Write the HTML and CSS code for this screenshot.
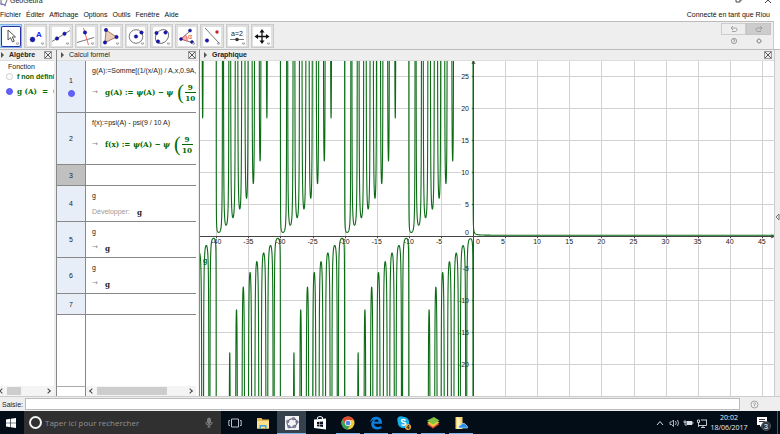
FILE: index.html
```html
<!DOCTYPE html>
<html lang="fr">
<head>
<meta charset="utf-8">
<title>GeoGebra</title>
<link rel="stylesheet" href="styles.css">
</head>
<body>
<header class="titlebar">
  <svg class="title-logo" width="8" height="7" viewBox="0 0 8 7"><path d="M1 0v4l4 1 2-5" fill="none" stroke="#667" /><circle cx="1.5" cy="4" r="1.2" fill="#88c"/><circle cx="5" cy="5" r="1.2" fill="#88c"/></svg>
  <span class="title-text">GeoGebra</span>
  <svg class="title-controls" width="40" height="7" viewBox="0 0 40 7"><path d="M3 0v2h4V0M8 0v1M32 3l3-3 3 3" fill="none" stroke="#444"/></svg>
</header>
<nav class="menubar">
  <a href="#">Fichier</a><a href="#">Éditer</a><a href="#">Affichage</a><a href="#">Options</a><a href="#">Outils</a><a href="#">Fenêtre</a><a href="#">Aide</a>
  <a href="#" class="account">Connecté en tant que Riou</a>
</nav>
<div class="toolbar">
  <div class="tools">
    <button class="tool active" aria-label="Déplacer"><svg viewBox="0 0 18 19"><path d="M6 3v10l2.500-2.300 2 4.300 1.800-.9-2-4.100h3.200z" fill="#fff" stroke="#555"/><path class="more" d="M14 16h3l-1.500 2z"/></svg></button>
    <button class="tool" aria-label="Point"><svg viewBox="0 0 18 19"><circle class="pt" cx="5.500" cy="12.500" r="2.400"/><text x="9" y="10" class="letter">A</text><path class="more" d="M14 16h3l-1.500 2z"/></svg></button>
    <button class="tool" aria-label="Droite"><svg viewBox="0 0 18 19"><path class="ln" d="M0 14.500L18 3.500"/><circle class="pt" cx="5" cy="11.500" r="1.700"/><circle class="pt" cx="12.500" cy="6.700" r="1.700"/><path class="more" d="M14 16h3l-1.500 2z"/></svg></button>
    <button class="tool" aria-label="Perpendiculaire"><svg viewBox="0 0 18 19"><path class="ln" d="M0 15.500L17 10.500"/><path d="M6.500 1l5 17" stroke="#f06a6a"/><circle class="pt" cx="8" cy="5.500" r="1.700"/><path class="more" d="M14 16h3l-1.500 2z"/></svg></button>
    <button class="tool" aria-label="Polygone"><svg viewBox="0 0 18 19"><path d="M4 3l10.500 7L3 15.500z" fill="#eacdbb" stroke="#a67b65"/><circle class="pt" cx="4" cy="3" r="1.700"/><circle class="pt" cx="14.500" cy="10" r="1.700"/><circle class="pt" cx="3" cy="15.500" r="1.700"/><path class="more" d="M14 16h3l-1.500 2z"/></svg></button>
    <button class="tool" aria-label="Cercle"><svg viewBox="0 0 18 19"><circle class="ln" cx="9" cy="9.500" r="6.800"/><circle class="pt" cx="9" cy="9.500" r="1.700"/><circle class="pt" cx="14.500" cy="5.500" r="1.700"/><path class="more" d="M14 16h3l-1.500 2z"/></svg></button>
    <button class="tool" aria-label="Conique"><svg viewBox="0 0 18 19"><ellipse class="ln" cx="9" cy="9.500" rx="7.500" ry="6" transform="rotate(-50 9 9.500)"/><circle class="pt" cx="3.500" cy="6" r="1.700"/><circle class="pt" cx="12.500" cy="5.500" r="1.700"/><circle class="pt" cx="5" cy="14.500" r="1.700"/><path class="more" d="M14 16h3l-1.500 2z"/></svg></button>
    <button class="tool" aria-label="Angle"><svg viewBox="0 0 18 19"><path d="M3 12l9-8M3 12l11 3.500" class="ln"/><path d="M3 12l4.500-4a6 6 0 0 1 1.500 6z" fill="#f5b4b4" stroke="#d44" stroke-width=".7"/><text x="10" y="12" class="alpha">α</text><circle class="pt" cx="3" cy="12" r="1.500"/><circle class="pt" cx="12" cy="3.500" r="1.500"/><circle class="pt" cx="14" cy="15" r="1.500"/><path class="more" d="M14 16h3l-1.500 2z"/></svg></button>
    <button class="tool" aria-label="Symétrie"><svg viewBox="0 0 18 19"><path class="ln" d="M2 1l14 15"/><circle class="pt" cx="4" cy="13.500" r="1.700"/><circle cx="14" cy="5" r="1.700" fill="#c22"/><path class="more" d="M14 16h3l-1.500 2z"/></svg></button>
    <button class="tool" aria-label="Curseur"><svg viewBox="0 0 18 19"><text x="3" y="9" class="slider-label">a=2</text><path class="ln" d="M2 12.500h14"/><circle cx="9" cy="12.500" r="1.800" fill="#333"/><path class="more" d="M14 16h3l-1.500 2z"/></svg></button>
    <button class="tool" aria-label="Déplacer la vue"><svg viewBox="0 0 18 19"><path d="M9 4v11M3.500 9.500h11" stroke="#111" stroke-width="1.300"/><path d="M9 2l2.500 3.500h-5zM9 17l2.500-3.500h-5zM1.500 9.500L5 7v5zM16.500 9.500L13 7v5z" fill="#111"/><path class="more" d="M14 16h3l-1.500 2z"/></svg></button>
  </div>
  <div class="actions">
    <button class="undo" aria-label="Annuler"><svg width="8" height="7" viewBox="0 0 8 7"><path d="M3 0L1 2l2 2M1 2h4.500q1.500 0 1.500 1.500T5.500 5.500H2" /></svg></button>
    <button class="redo" aria-label="Refaire"><svg width="8" height="7" viewBox="0 0 8 7"><path d="M5 0l2 2-2 2M7 2H2.500Q1 2 1 3.500t1.500 2H6" /></svg></button>
    <button class="plain" aria-label="Aide"><svg width="8" height="8" viewBox="0 0 8 8"><circle cx="4" cy="4" r="2.700"/><path d="M3 3q1-1 2 0 0 1-1 1v1.500"/></svg></button>
    <button class="plain" aria-label="Préférences"><svg width="8" height="8" viewBox="0 0 8 8"><circle cx="4" cy="4" r="1.700"/><path d="M4 1v1M4 6v1M1 4h1M6 4h1M2 2l.7.7M5.300 5.300L6 6M6 2l-.7.7M2.700 5.300L2 6"/></svg></button>
  </div>
</div>
<main class="workspace">
  <section class="algebra">
    <h2 class="panel-head strong"><i class="arrow"></i><span>Algèbre</span><button class="close" aria-label="Fermer Algèbre"></button></h2>
    <div class="tree">
      <p class="tree-title">Fonction</p>
      <p class="tree-item"><i class="marble"></i><b>f non défini</b></p>
      <p class="tree-item math second"><i class="marble on"></i><span>g (A)&nbsp; =&nbsp; ψ</span></p>
    </div>
    <div class="scroll"><i class="left"></i><span class="track"><i class="thumb short"></i></span><i class="right"></i></div>
  </section>
  <section class="cas">
    <h2 class="panel-head"><i class="arrow"></i><span>Calcul formel</span><button class="close" aria-label="Fermer Calcul formel"></button></h2>
    <div class="rows">
      <div class="row tall"><div class="num">1<i class="marble on"></i></div><div class="cell"><p>g(A):=Somme[(1/(x/A)) / A,x,0.9A,1/</p><p class="out math"><i class="to">→</i>g(A) := <em>ψ</em>(A) − <em>ψ</em><span class="paren">(</span><span class="frac"><span>9</span><span>10</span></span></p></div></div>
      <div class="row tall"><div class="num">2</div><div class="cell"><p>f(x):=psi(A) - psi(9 / 10 A)</p><p class="out math"><i class="to">→</i>f(x) := <em>ψ</em>(A) − <em>ψ</em><span class="paren">(</span><span class="frac"><span>9</span><span>10</span></span></p></div></div>
      <div class="row empty selected"><div class="num">3</div><div class="cell"></div></div>
      <div class="row"><div class="num">4</div><div class="cell"><p>g</p><p class="out"><span class="dev">Développer:</span><b>g</b></p></div></div>
      <div class="row"><div class="num">5</div><div class="cell"><p>g</p><p class="out"><i class="to">→</i><b>g</b></p></div></div>
      <div class="row"><div class="num">6</div><div class="cell"><p>g</p><p class="out"><i class="to">→</i><b>g</b></p></div></div>
      <div class="row empty"><div class="num">7</div><div class="cell"></div></div>
      <div class="row rest"><div class="num"></div><div class="cell"></div></div>
    </div>
    <div class="cas-foot"><div class="corner"></div><div class="scroll"><i class="left"></i><span class="track"><i class="thumb"></i></span><i class="right"></i></div></div>
  </section>
  <section class="graph">
    <h2 class="panel-head strong"><i class="arrow"></i><span>Graphique</span><button class="close" aria-label="Fermer Graphique"></button></h2>
    <div class="plot"><svg id="plot"></svg></div>
  </section>
  <button class="side" aria-label="Afficher les vues"><svg width="5" height="8" viewBox="0 0 5 8"><path d="M4 1L1 4l3 3z" fill="none" stroke="#777"/></svg></button>
</main>
<form class="inputbar">
  <label for="saisie">Saisie:</label><input id="saisie" type="text">
  <button type="button" class="plain" aria-label="Aide de saisie"><svg width="9" height="9" viewBox="0 0 9 9"><circle cx="4.500" cy="4.500" r="3.500"/><path d="M3.500 3.500q1-1.200 2 0 0 1-1 1.200v1.500"/></svg></button>
</form>
<footer class="taskbar">
  <button class="start" aria-label="Démarrer"><svg width="10" height="10" viewBox="0 0 10 10"><path fill="#fff" d="M0 1.500l4.300-.7v3.900H0zM4.900.7L10 0v4.700H4.900zM0 5.300h4.300v3.900L0 8.500zM4.900 5.300H10V10l-5.100-.7z"/></svg></button>
  <div class="search">
    <i class="ring"></i><input type="text" aria-label="Recherche" placeholder="Taper ici pour rechercher">
    <svg width="8" height="11" viewBox="0 0 8 11"><rect x="2.500" y="1" width="3" height="5.500" rx="1.500" fill="#777" stroke="#999" stroke-width=".6"/><path d="M1 5v1q0 2 3 2t3-2V5M4 8v2M2.500 10h3" fill="none" stroke="#999" stroke-width=".8"/></svg>
  </div>
  <div class="apps">
    <button aria-label="Vue des tâches"><svg viewBox="0 0 14 14"><path d="M3.500 3h7v8h-7zM2 4.500H.8v5H2M12 4.500h1.200v5H12" fill="none" stroke="#bbc"/></svg></button>
    <button aria-label="Explorateur"><svg viewBox="0 0 14 14"><path d="M1 2h4.500l1 1.500H13v9H1z" fill="#e9bd52"/><path d="M1 5h12v7.500H1z" fill="#ffe08a"/><path d="M3.500 12.500V9h7v3.500H9v-2H5v2z" fill="#3ba0dd"/></svg></button>
    <button class="open current" aria-label="GeoGebra"><svg viewBox="0 0 14 14"><path fill="#f4f4f6" d="M0 0h14v14H0z"/><ellipse cx="7" cy="7" rx="5" ry="4.200" fill="none" stroke="#555" transform="rotate(-25 7 7)"/><g fill="#8d8cd6" stroke="#444" stroke-width=".5"><circle cx="8.500" cy="2.700" r="1.300"/><circle cx="12" cy="6" r="1.300"/><circle cx="9.500" cy="10.500" r="1.300"/><circle cx="4" cy="10.800" r="1.300"/><circle cx="2.700" cy="5.500" r="1.300"/></g></svg></button>
    <button aria-label="Store"><svg viewBox="0 0 14 14"><path fill="#fff" d="M1 3.500l12-1V13.500L1 12z"/><path d="M4.500 3V1.300Q7-.3 9.500 1.300V3" fill="none" stroke="#fff"/><path fill="#07101c" d="M4 6l2.500-.2V8H4zM7 5.700l3-.2V8H7zM4 8.500h2.500v2L4 10.300zM7 8.500h3V11l-3-.4z"/></svg></button>
    <button class="open" aria-label="Chrome"><svg viewBox="0 0 14 14"><circle cx="7" cy="7" r="6.500" fill="#f8c936"/><path d="M1.300 3.800A6.500 6.500 0 0 1 12.800 4H7L4.400 8.500z" fill="#df4938"/><path d="M1.300 3.800a6.500 6.500 0 0 0 5.200 9.700L9.500 8.500H4.200z" fill="#37a25a"/><circle cx="7" cy="7" r="3" fill="#fff"/><circle cx="7" cy="7" r="2.300" fill="#4787e8"/></svg></button>
    <button class="open" aria-label="Edge"><svg viewBox="0 0 14 14"><path fill="#0c80df" d="M1 6.500Q2 .7 7.300.7q5.700 0 5.700 7H5q.3 3.300 3.800 3.300 2 0 3.500-1v2.600Q10.500 13.500 8 13.500q-5.800-.2-5.800-5.500Q2.400 5 5 3.500 2.700 4 1 6.500zM5.200 5.700h4.500Q9.500 3.400 7.500 3.400T5.200 5.700z"/></svg></button>
    <button class="open" aria-label="Skype"><svg viewBox="0 0 14 14"><circle cx="4" cy="4" r="3.700" fill="#1baee8"/><circle cx="6.500" cy="6.500" r="5.700" fill="#1baee8"/><path d="M8.700 4.300Q6.500 2.800 4.700 4q-.8 1.500 1.800 2.300 3 .8 2 2.400-1.700 1.200-4 0" fill="none" stroke="#fff" stroke-width="1.500"/><circle cx="11" cy="11" r="3" fill="#f3b33e"/><path d="M11.700 13V9L9.700 11.800h3" fill="none" stroke="#222" stroke-width=".8"/></svg></button>
    <button class="open" aria-label="BlueStacks"><svg viewBox="0 0 14 14"><path d="M1 8.500L8 6l5.500 2L7 12.500z" fill="#e34b3c"/><path d="M1 6.700l6-3 6.500 2.600L7 10.700z" fill="#f3cf3a"/><path d="M1 4.500L8 1l5.500 3.500-6.500 4z" fill="#83c341"/></svg></button>
    <button class="open" aria-label="Documents"><svg viewBox="0 0 14 14"><path d="M1.500 1h7v12h-7z" fill="#f5d47c"/><path d="M3 1l3 2v10H3z" fill="#fff0bd"/><path d="M5 12q-1-3 2-3 1-3 3.500-1.500L12 9q2 1 1.500 3z" fill="#2992e8" stroke="#cae7ff" stroke-width=".6"/></svg></button>
  </div>
  <div class="tray">
    <svg width="54" height="14" viewBox="0 0 54 14" fill="none" stroke="#d9dde2"><path d="M4 9l3-3.500L10 9"/><path d="M17 6v2.500h1.500l2 2V4l-2 2zM22.500 5q1.500 2 0 4M24.500 4q2 3 0 6" stroke-width=".8"/><path fill="#d9dde2" d="M34 5.500h5v3h-5zM40 6.500v1"/><path d="M31 5h2v1.500h-2zM32 7v2h2" stroke-width=".8"/><path d="M48 4h6M53.500 4v5.500H46M44.500 4h2v2.500h-2zM45.500 7v4M48 11.500h4M50 9v2" stroke-width=".9"/></svg>
    <time class="clock"><span>20:02</span><span>18/06/2017</span></time>
    <button class="notif" aria-label="Notifications"><svg width="16" height="16" viewBox="0 0 16 16"><path fill="#fff" d="M2 2h10v8H7l-2 2v-2H2z"/><path d="M4 4.500h6M4 6.500h6" stroke="#334"/><circle cx="11" cy="11" r="4.500" fill="#34383e" stroke="#777" stroke-width=".6"/><text x="9" y="14" class="count">3</text></svg></button>
  </div>
</footer>
<script src="plot.js"></script>
</body>
</html>
```
FILE: styles.css
```css
* { box-sizing: border-box; }
body { margin: 0; height: 100vh; display: flex; flex-direction: column; overflow: hidden; background: #fff; color: #222; font: 7px/9px "Liberation Sans", Arial, sans-serif; }
button { padding: 0; border: 0; background: none; color: inherit; display: flex; align-items: center; justify-content: center; font: inherit; }
p, h2 { margin: 0; }
a { color: inherit; text-decoration: none; }
svg { display: block; flex: none; }
i { font-style: normal; }

.titlebar { height: 7px; flex: none; display: flex; overflow: hidden; }
.title-text { margin: -4px 0 0 2px; }
.title-controls { margin-left: auto; margin-right: 7px; }
.menubar { height: 14px; flex: none; display: flex; align-items: center; gap: 5px; color: #111; }
.account { margin-left: auto; margin-right: 10px; }

.toolbar { height: 28px; flex: none; display: flex; justify-content: space-between; background: #eee; border-top: 1px solid #bbb; margin-right: 6px; border-right: 1px solid #ccc; }
.tools { display: grid; grid-template-columns: repeat(11, 1fr); width: 277px; margin-left: -2px; padding: 2px 0 1px; }
.tool { margin: 0 1px; border: 1px solid #ccc; background: #e0e0e0; }
.tool svg { width: 18px; height: 19px; background: #fff; border-radius: 1px; fill: none; }
.tool.active { border: 1px solid #7eb2e8; background: #b8d8f8; }
.tool.active svg { box-shadow: 0 0 0 1px #2633a8; }
.pt { fill: #1717c8; stroke: #111155; stroke-width: .5; }
.ln { fill: none; stroke: #666; stroke-width: .9; }
.more { fill: #eee; stroke: #888; stroke-width: .6; }
.letter { fill: #2222f5; font: bold 8px "Liberation Sans", sans-serif; }
.alpha { fill: #e33; font: 7px "Liberation Sans", sans-serif; }
.slider-label { fill: #222; font: 7px "Liberation Sans", sans-serif; }
.actions { display: grid; grid-template: 12px 12px / 25px 25px; padding: 1px 2px 0 0; }
.actions svg, .plain svg { fill: none; stroke: #999; stroke-width: .9; }
.undo { border: 1px solid #ccc; background: #eee; }
.redo { border: 1px solid #c4c4c4; background: #ccc; }

.workspace { flex: 1; min-height: 0; display: flex; background: #eee; border-top: 1px solid #bbb; }
.workspace section { display: flex; flex-direction: column; min-width: 0; background: #fff; overflow: hidden; }
.panel-head { height: 11px; flex: none; display: flex; align-items: center; gap: 5px; padding: 0 2px 0 4px; background: #eee; border-bottom: 1px solid #ddd; color: #222; font: 7px/10px "Liberation Sans", Arial, sans-serif; }
.strong { font-weight: bold; }
.arrow { border: 3px solid transparent; border-left-color: #555; border-right: 0; width: 0; }
.close { margin-left: auto; width: 8px; height: 8px; border: 1px solid #999; background: linear-gradient(45deg, transparent 44%, #555 44% 56%, transparent 56%), linear-gradient(-45deg, transparent 44%, #555 44% 56%, transparent 56%); }
.algebra { width: 54px; flex: none; }
.algebra .panel-head { padding-left: 1px; }
.tree { flex: 1; white-space: nowrap; color: #006400; overflow: hidden; }
.tree-title { color: #222; padding: 2px 0 0 8px; line-height: 8px; }
.tree-item { display: flex; align-items: center; gap: 4px; height: 10px; padding-left: 1px; }
.tree-item::before { content: ""; width: 5px; height: 1px; margin-right: -4px; background: #ccc; }
.tree-item.second { margin-top: 5px; }
.marble { width: 7px; height: 7px; margin-left: 5px; flex: none; border: 1px solid #ccc; border-radius: 50%; }
.marble.on { border-color: #5555ee; background: #6060ff; }
.math, .math em, .out b { font: bold 8px/10px "DejaVu Serif Condensed", "DejaVu Serif", serif; }
.math { color: #006a00; }
.math em { font-style: italic; }

.cas { width: 142px; flex: none; margin-left: 2px; border-left: 1px solid #888; }
.rows { flex: 1; display: flex; flex-direction: column; min-height: 0; padding-right: 2px; }
.row { height: 36px; flex: none; display: flex; border-bottom: 1px solid #888; }
.row.tall { height: 52px; }
.row.empty { height: 21px; }
.row.rest { height: auto; flex: 1; border: 0; }
.num { width: 29px; flex: none; display: flex; flex-direction: column; align-items: center; justify-content: center; gap: 5px; background: #e8eef8; border-right: 1px solid #888; }
.num .marble { margin: 0; }
.selected .num { background: #c0c0c0; }
.rest .num { background: #fff; }
.cell { flex: 1; min-width: 0; overflow: hidden; display: flex; flex-direction: column; padding: 5px 0 0 6px; gap: 6px; white-space: nowrap; }
.tall .cell { gap: 5px; }
.out { display: flex; align-items: center; height: 11px; white-space: pre; }
.tall .out { height: 24px; }
.to { width: 13px; flex: none; color: #888; font: 7px/9px "DejaVu Sans", sans-serif; }
.dev { width: 45px; color: #999; }
.paren { font: 20px/20px "Liberation Serif", serif; margin: 0 1px 0 4px; }
.frac { display: flex; flex-direction: column; align-items: center; }
.frac span:first-child { border-bottom: 1px solid #006a00; padding: 0 3px; }
.cas-foot { display: flex; height: 10px; flex: none; padding-right: 2px; }
.corner { width: 29px; flex: none; border-top: 1px solid #aaa; border-right: 1px solid #888; }
.scroll { flex: 1; display: flex; align-items: center; gap: 3px; padding: 0 4px; background: #f4f4f4; height: 10px; }
.algebra .scroll { flex: none; padding: 0 4px 0 0; }
.track { flex: 1; height: 8px; display: flex; }
.thumb { width: 80%; background: #cdcdcd; }
.thumb.short { width: 40%; }
.left, .right { width: 4px; height: 4px; border: solid #444; border-width: 1px 0 0 1px; transform: rotate(-45deg); }
.right { transform: rotate(135deg); }

.graph { flex: 1; border-left: 1px solid #888; margin-left: 1px; }
.plot { flex: 1; min-height: 0; overflow: hidden; }
.plot svg { width: 100%; height: 100%; }
.grid { stroke: #d2d2d2; }
.axis { stroke: #444; fill: none; }
.curve { fill: none; stroke: #0c6c16; stroke-width: 1.1; stroke-linejoin: round; }
.label { fill: #222; font: 7px "Liberation Sans", Arial, sans-serif; }
.label-bg { fill: #fff; }
.curve-name { fill: #006400; font: bold 7px "Liberation Sans", sans-serif; }
.side { width: 6px; flex: none; border-left: 1px solid #ccc; background: #eee; padding-bottom: 13px; }

.inputbar { height: 15px; flex: none; display: flex; align-items: center; background: #eee; border-top: 1px solid #ccc; padding-left: 2px; }
.inputbar label { width: 23px; }
.inputbar input { flex: 1; min-width: 0; height: 12px; border: 1px solid #bbb; padding: 0 2px; background: #fff; font: inherit; }
.inputbar .plain { width: 28px; margin-right: 12px; }

.taskbar { height: 23px; flex: none; display: flex; background: #020d18; color: #eee; }
.start { width: 24px; padding-right: 3px; }
.search { width: 197px; display: flex; align-items: center; gap: 3px; padding: 0 8px 0 5px; background: #303030; }
.ring { width: 13px; height: 13px; flex: none; border: 2px solid #f2f2f2; border-radius: 50%; }
.search input { flex: 1; min-width: 0; height: 15px; border: 0; padding: 0; background: none; color: #999; font: 8px/12px "Open Sans", sans-serif; }
.search input::placeholder { color: #929292; opacity: 1; }
.apps { display: grid; grid-template-columns: repeat(9, 1fr); width: 254px; }
.apps button { position: relative; }
.apps svg { width: 14px; height: 14px; }
.current { background: #35424e; }
.open::after { content: ""; position: absolute; left: 2px; right: 2px; bottom: 0; height: 1px; background: #78b5e8; }
.current::after { left: 0; right: 0; }
.tray { margin-left: auto; display: flex; align-items: center; margin-right: 2px; padding-right: 6px; border-right: 1px solid #4a525c; }
.clock { width: 44px; display: flex; flex-direction: column; align-items: center; font: 7px/10px "Open Sans", sans-serif; }
.notif { margin-left: 4px; }
.count { fill: #fff; font: 7px "Liberation Sans", sans-serif; }
```
FILE: plot.js
```js
const NS = "http://www.w3.org/2000/svg";
const svg = document.getElementById("plot");
const W = svg.clientWidth, H = svg.clientHeight;
const UNIT = 6.42;
const ox = Math.round(W * 0.475), oy = Math.round(H * 0.523);
svg.setAttribute("viewBox", `0 0 ${W} ${H}`);

function add(tag, attrs, text) {
  const el = document.createElementNS(NS, tag);
  for (const k in attrs) el.setAttribute(k, attrs[k]);
  if (text !== undefined) el.textContent = text;
  svg.appendChild(el);
}

// Digamma: recurrence up to 6, then the asymptotic series.
function psiPositive(x) {
  let r = 0;
  while (x < 6) { r -= 1 / x; x += 1; }
  const f = 1 / (x * x);
  return r + Math.log(x) - 0.5 / x - f * (1 / 12 - f * (1 / 120 - f / 252));
}
function psi(x) {
  return x > 0 ? psiPositive(x) : psiPositive(1 - x) - Math.PI / Math.tan(Math.PI * x);
}
const g = x => psi(x) - psi(0.9 * x);

const px = x => ox + x * UNIT;
const py = y => oy - y * UNIT;
const xMin = -ox / UNIT, xMax = (W - ox) / UNIT;

for (let v = -40; v <= 45; v += 5) {
  const x = Math.round(px(v)) + 0.5;
  add("line", { class: "grid", x1: x, x2: x, y1: 0, y2: H });
}
for (let v = -20; v <= 25; v += 5) {
  const y = Math.round(py(v)) + 0.5;
  add("line", { class: "grid", x1: 0, x2: W, y1: y, y2: y });
}
add("path", { class: "axis", d: `M0 ${oy + 0.5}H${W}M${ox + 0.5} 0V${H}` });
add("path", { class: "axis", d: `M${ox - 1} 3l1.500-3 1.500 3M${W - 3} ${oy - 1}l3 1.500-3 1.500` });

for (let v = -40; v <= 45; v += 5) {
  const x = px(v);
  add("path", { class: "axis", d: `M${Math.round(x) + 0.5} ${oy}v2` });
  const start = v === 0 ? x + 3 : x - (v < 0 ? 5 : 4);
  const w = String(v).length * 4;
  if (v !== 0) add("rect", { class: "label-bg", x: start, y: oy + 3, width: w, height: 6 });
  add("text", { class: "label", x: start, y: oy + 8 }, v);
}
for (let v = -20; v <= 25; v += 5) {
  const y = v === 0 ? py(v) - 1 : py(v) + 3;
  add("path", { class: "axis", d: `M${ox - 1} ${Math.round(py(v)) + 0.5}h2` });
  if (v > 0) add("rect", { class: "label-bg", x: ox - 12, y: y - 6, width: 10, height: 7 });
  add("text", { class: "label", x: ox - 4, y, "text-anchor": "end" }, v);
}

// One branch between each pair of neighbouring poles, sampled most densely at its ends.
// Each branch is its own path; steep ends are reduced to one segment that leaves the view.
const poles = [xMax + 1];
for (let n = 0; n < 60; n++) {
  poles.push(-n);
  if (n % 9) poles.push(-n / 0.9);
}
poles.sort((a, b) => a - b);
for (let i = 0; i + 1 < poles.length; i++) {
  const a = poles[i], b = poles[i + 1];
  if (b < xMin || a >= xMax) continue;
  if (a > -9 && b < 0 && b - a < 0.23) continue;
  const n = b > 0 ? 240 : 90;
  const points = [];
  for (let k = 1; k < n; k++) {
    const t = (1 - Math.cos(Math.PI * k / n)) / 2;
    const x = a + (b - a) * t;
    points.push([px(x), Math.max(-60, Math.min(H + 60, py(g(x))))]);
  }
  if (b <= 0) {
    const edge = points[1][1] < oy ? -60 : H + 60;
    points.unshift([px(a), edge]);
    points.push([px(b), edge]);
  } else {
    points.unshift([px(a), -60]);
  }
  const inView = points.filter(([x, y], k) => {
    const prev = points[k - 1], next = points[k + 1];
    return !prev || !next || y !== prev[1] || y !== next[1];
  });
  add("path", { class: "curve", d: "M" + inView.map(([x, y]) => `${x.toFixed(2)} ${y.toFixed(2)}`).join("L") });
}
add("text", { class: "curve-name", x: 3, y: oy + 27 }, "g");
```
